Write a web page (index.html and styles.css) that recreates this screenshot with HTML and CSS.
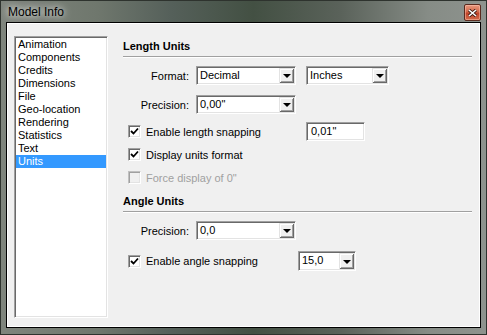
FILE: index.html
```html
<!DOCTYPE html>
<html lang="en">
<head>
  <meta charset="UTF-8" />
  <title>Model Info</title>
  <link rel="stylesheet" href="styles.css">
</head>
<body>
  <div class="window">
    <div class="titlebar">
      <span class="title">Model Info</span>
      <span class="close">
        <svg width="9" height="8" viewBox="0 0 9 8"><path d="M1 1 L8 7 M8 1 L1 7" stroke="#3a1a12" stroke-width="3.2"/><path d="M1 1 L8 7 M8 1 L1 7" stroke="#fff" stroke-width="1.6"/></svg>
      </span>
    </div>

    <div class="client">
      <ul class="list">
        <li>Animation</li>
        <li>Components</li>
        <li>Credits</li>
        <li>Dimensions</li>
        <li>File</li>
        <li>Geo-location</li>
        <li>Rendering</li>
        <li>Statistics</li>
        <li>Text</li>
        <li class="selected">Units</li>
      </ul>

      <div class="panel">
        <div class="heading">Length Units</div>
        <div class="sep"></div>

        <div class="row row-format">
          <span class="label">Format:</span>
          <div class="combo combo-wide"><span class="value">Decimal</span><span class="btn"><i class="arrow"></i></span></div>
          <div class="combo combo-units"><span class="value">Inches</span><span class="btn"><i class="arrow"></i></span></div>
        </div>

        <div class="row row-precision">
          <span class="label">Precision:</span>
          <div class="combo combo-wide"><span class="value">0,00"</span><span class="btn"><i class="arrow"></i></span></div>
        </div>

        <div class="row row-snap">
          <label class="check">
            <span class="box"><svg width="9" height="9" viewBox="0 0 9 9"><path d="M1 4 L3.5 6.5 L8 1.5" fill="none" stroke="#000" stroke-width="1.8"/></svg></span>
            Enable length snapping
          </label>
          <div class="field">0,01"</div>
        </div>

        <div class="row row-check">
          <label class="check">
            <span class="box"><svg width="9" height="9" viewBox="0 0 9 9"><path d="M1 4 L3.5 6.5 L8 1.5" fill="none" stroke="#000" stroke-width="1.8"/></svg></span>
            Display units format
          </label>
        </div>

        <div class="row row-check">
          <label class="check disabled">
            <span class="box"></span>
            Force display of 0"
          </label>
        </div>

        <div class="heading heading-angle">Angle Units</div>
        <div class="sep"></div>

        <div class="row row-angle">
          <span class="label">Precision:</span>
          <div class="combo combo-wide"><span class="value">0,0</span><span class="btn"><i class="arrow"></i></span></div>
        </div>

        <div class="row row-anglesnap">
          <label class="check check-short">
            <span class="box"><svg width="9" height="9" viewBox="0 0 9 9"><path d="M1 4 L3.5 6.5 L8 1.5" fill="none" stroke="#000" stroke-width="1.8"/></svg></span>
            Enable angle snapping
          </label>
          <div class="combo combo-small"><span class="value">15,0</span><span class="btn"><i class="arrow"></i></span></div>
        </div>
      </div>
    </div>
  </div>
</body>
</html>
```

FILE: styles.css
```css
body {
  margin: 0;
  padding: 0;
  font-family: 'Liberation Sans', Arial, sans-serif;
  font-size: 11px;
  color: #000;
  background: #fff;
}

.window {
  width: 487px;
  height: 335px;
  box-sizing: border-box;
  padding: 0 5px 6px 5px;
  border: 1px solid #2e332e;
  background: linear-gradient(90deg, #7f857d 0%, #6f776d 20%, #55605a 35%, #435043 52%, #5a625a 70%, #868c86 88%, #8e938e 100%);
  display: flex;
  flex-direction: column;
}

.titlebar {
  height: 21px;
  display: flex;
  align-items: center;
  justify-content: space-between;
  position: relative;
}

.title {
  font-size: 12px;
  margin-left: 2px;
  margin-top: 1px;
  color: #000;
  text-shadow: 0 0 6px rgba(255, 255, 255, 0.9), 0 0 10px rgba(255, 255, 255, 0.6);
}

.close {
  width: 15px;
  height: 15px;
  margin-right: 0;
  margin-top: 2px;
  border: 1px solid #5a2a1e;
  border-radius: 2px;
  background: linear-gradient(180deg, #e89a80 0%, #d4684a 45%, #c0432a 55%, #d26a4a 100%);
  box-shadow: inset 0 0 0 1px rgba(255, 200, 180, 0.5);
  display: flex;
  align-items: center;
  justify-content: center;
}

.client {
  flex: 1;
  display: flex;
  align-items: flex-start;
  background: #f0f0f0;
  border: 1px solid #000;
  box-shadow: inset 1px 1px 0 #fff, inset -1px -1px 0 #fff;
}

.list {
  list-style: none;
  margin: 13px 0 0 7px;
  padding: 1px 1px 0 0;
  width: 94px;
  height: 282px;
  box-sizing: border-box;
  background: #fff;
  border: 1px solid;
  border-color: #a0a0a0 #fff #fff #a0a0a0;
  box-shadow: inset 1px 1px 0 #696969, inset -1px -1px 0 #e3e3e3;
}

.list li {
  height: 13px;
  line-height: 13px;
  padding-left: 2px;
  margin-left: 1px;
}

.list li.selected {
  background: #3399ff;
  color: #fff;
}

.panel {
  flex: 1;
  margin: 0 8px 0 15px;
  padding-top: 16px;
}

.heading {
  font-weight: bold;
  height: 14px;
  line-height: 14px;
}

.heading-angle {
  margin-top: 7px;
}

.sep {
  margin-top: 3px;
  border-top: 1px solid #a0a0a0;
  border-bottom: 1px solid #fff;
}

.row {
  display: flex;
  align-items: center;
}

.row-format {
  margin-top: 8px;
  height: 19px;
}

.row-precision {
  margin-top: 10px;
  height: 19px;
}

.row-snap {
  margin-top: 8px;
  height: 19px;
}

.row-check {
  margin-top: 4px;
  height: 19px;
}

.row-angle {
  margin-top: 8px;
  height: 19px;
}

.row-anglesnap {
  margin-top: 11px;
  height: 20px;
}

.label {
  width: 66px;
  text-align: right;
  margin-right: 7px;
}

.combo {
  height: 19px;
  box-sizing: border-box;
  display: flex;
  align-items: stretch;
  justify-content: space-between;
  background: #fff;
  border: 1px solid;
  border-color: #a0a0a0 #fff #fff #a0a0a0;
  box-shadow: inset 1px 1px 0 #696969, inset -1px -1px 0 #e3e3e3;
  padding: 1px;
}

.combo .value {
  padding-left: 2px;
  line-height: 15px;
}

.combo-wide {
  width: 100px;
}

.combo-units {
  width: 83px;
  margin-left: 10px;
}

.combo-small {
  width: 58px;
  height: 20px;
}

.btn {
  width: 15px;
  background: #f0f0f0;
  box-shadow: inset 1px 1px 0 #e3e3e3, inset -1px -1px 0 #696969, inset 2px 2px 0 #fff, inset -2px -2px 0 #a0a0a0;
  display: flex;
  align-items: center;
  justify-content: center;
}

.arrow {
  width: 0;
  height: 0;
  margin-top: 1px;
  border-left: 4px solid transparent;
  border-right: 4px solid transparent;
  border-top: 4px solid #000;
}

.check {
  width: 183px;
  box-sizing: border-box;
  padding-left: 5px;
  display: flex;
  align-items: center;
  gap: 5px;
}

.check-short {
  width: 175px;
}

.box {
  width: 13px;
  height: 13px;
  box-sizing: border-box;
  background: #fff;
  border: 1px solid;
  border-color: #a0a0a0 #fff #fff #a0a0a0;
  box-shadow: inset 1px 1px 0 #696969, inset -1px -1px 0 #e3e3e3;
  display: flex;
  align-items: center;
  justify-content: center;
}

.check.disabled {
  color: #a0a0a0;
}

.check.disabled .box {
  background: #f0f0f0;
  border-color: #c0c0c0 #fff #fff #c0c0c0;
  box-shadow: inset 1px 1px 0 #a0a0a0, inset -1px -1px 0 #e3e3e3;
}

.field {
  width: 59px;
  height: 19px;
  box-sizing: border-box;
  background: #fff;
  border: 1px solid;
  border-color: #a0a0a0 #fff #fff #a0a0a0;
  box-shadow: inset 1px 1px 0 #696969, inset -1px -1px 0 #e3e3e3;
  padding: 1px 0 0 4px;
  line-height: 15px;
}
```
